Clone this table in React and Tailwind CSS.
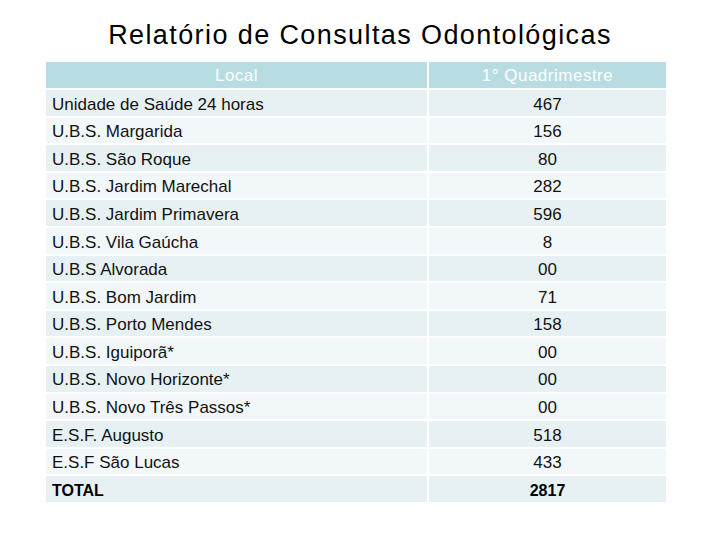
import React from 'react';

const rows = [
  ['Unidade de Saúde 24 horas', '467'],
  ['U.B.S. Margarida', '156'],
  ['U.B.S. São Roque', '80'],
  ['U.B.S. Jardim Marechal', '282'],
  ['U.B.S. Jardim Primavera', '596'],
  ['U.B.S. Vila Gaúcha', '8'],
  ['U.B.S Alvorada', '00'],
  ['U.B.S. Bom Jardim', '71'],
  ['U.B.S. Porto Mendes', '158'],
  ['U.B.S. Iguiporã*', '00'],
  ['U.B.S. Novo Horizonte*', '00'],
  ['U.B.S. Novo Três Passos*', '00'],
  ['E.S.F. Augusto', '518'],
  ['E.S.F São Lucas', '433'],
];

const App = () => {
  return (
    <div className="w-[720px] h-[540px] bg-white font-['Liberation_Sans',Arial,sans-serif] text-black">
      {/* Title */}
      <h1 className="pt-[19px] text-center text-[27px] leading-[33px] tracking-[1.4px]">
        Relatório de Consultas Odontológicas
      </h1>

      {/* Table */}
      <div className="ml-[46px] mt-[10px] grid grid-cols-[381px_237px] gap-x-[2px] gap-y-[2px]">
        <div className="h-[26px] pt-[2px] bg-[#b7dde2] flex items-center justify-center text-white text-[17px] tracking-[0.5px]">
          Local
        </div>
        <div className="h-[26px] pt-[2px] bg-[#b7dde2] flex items-center justify-center text-white text-[17px] tracking-[0.5px]">
          1° Quadrimestre
        </div>

        {rows.map(([name, value], i) => {
          const bg = i % 2 === 0 ? 'bg-[#e7f1f3]' : 'bg-[#f2f8f9]';
          return (
            <React.Fragment key={name}>
              <div className={`h-[25.6px] pt-[3px] ${bg} flex items-center pl-[6px] text-[17px] text-[#111]`}>
                {name}
              </div>
              <div className={`h-[25.6px] pt-[3px] ${bg} flex items-center justify-center text-[17px] text-[#111]`}>
                {value}
              </div>
            </React.Fragment>
          );
        })}

        <div className="h-[25.6px] pt-[3px] bg-[#e7f1f3] flex items-center pl-[6px] text-[16px] font-bold">
          TOTAL
        </div>
        <div className="h-[25.6px] pt-[3px] bg-[#e7f1f3] flex items-center justify-center text-[16px] font-bold">
          2817
        </div>
      </div>
    </div>
  );
};

export default App;
